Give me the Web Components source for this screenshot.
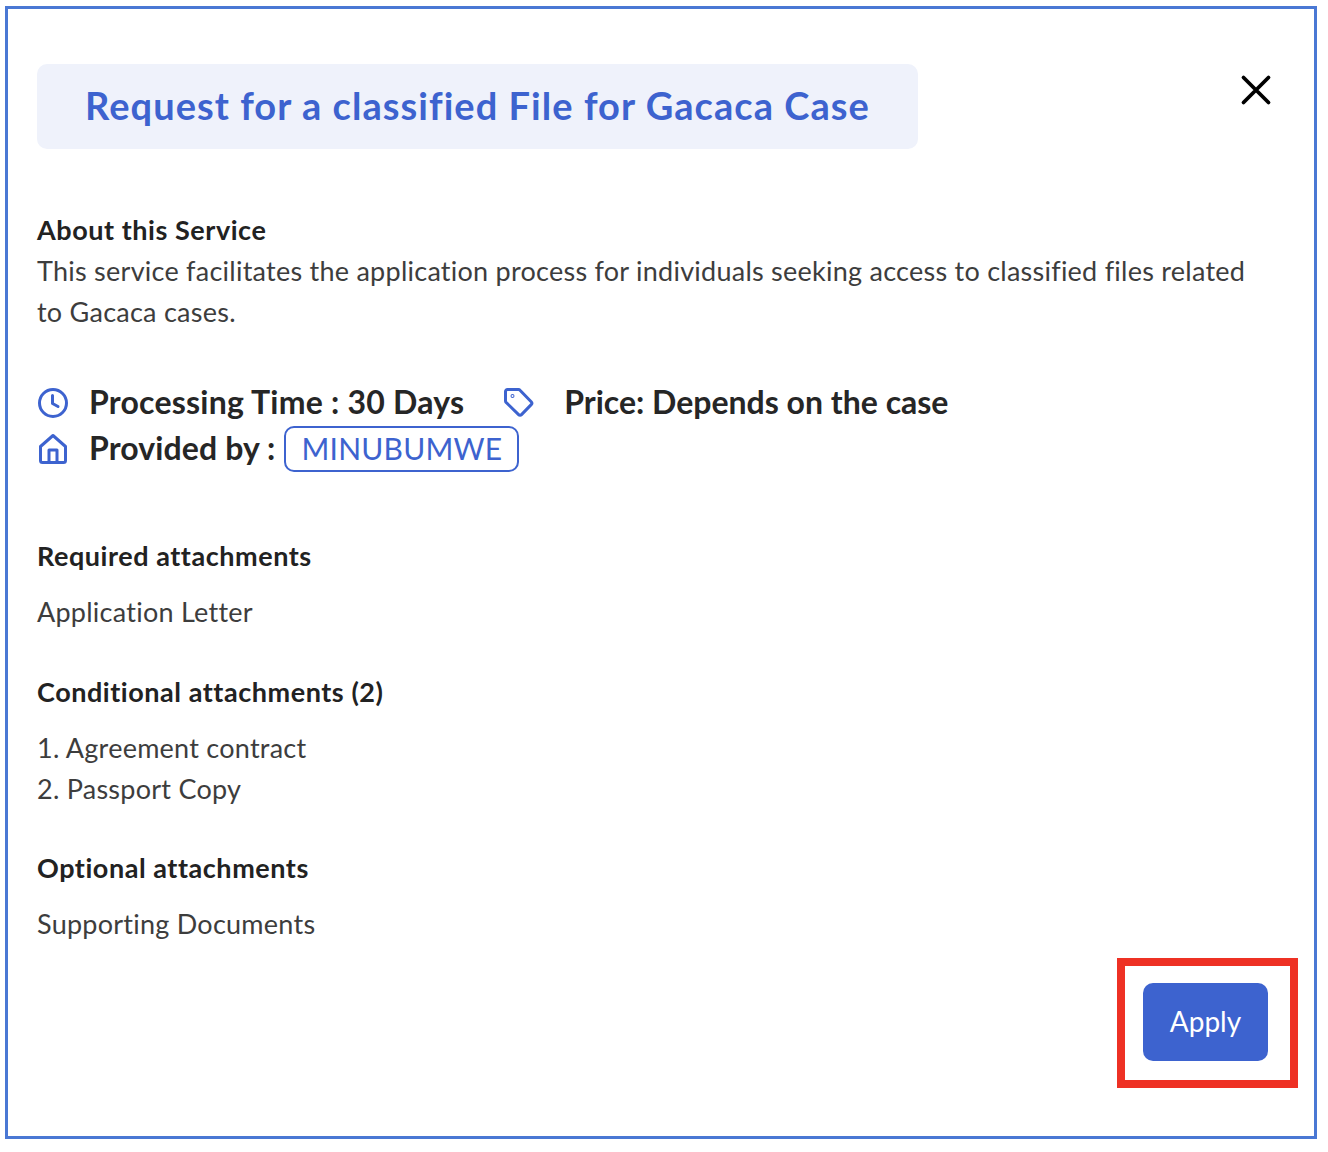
<!DOCTYPE html>
<html>
<head>
<meta charset="utf-8">
<title>Service details</title>
<style>
    html, body { margin: 0; background: #fff; }
    body { font-family: Lato, "Open Sans", sans-serif; color: #333; }
</style>
</head>
<body>
<service-dialog>
    <span slot="title">Request for a classified File for Gacaca Case</span>
    <about-section heading="About this Service">This service facilitates the application process for individuals seeking access to classified files related to Gacaca cases.</about-section>
    <meta-row></meta-row>
    <attachment-group heading="Required attachments"><div>Application Letter</div></attachment-group>
    <attachment-group heading="Conditional attachments (2)"><div>1. Agreement contract</div><div>2. Passport Copy</div></attachment-group>
    <attachment-group heading="Optional attachments"><div>Supporting Documents</div></attachment-group>
    <apply-button slot="footer">Apply</apply-button>
</service-dialog>

<script>
const dialogTemplate = document.createElement('template');
dialogTemplate.innerHTML = `
<style>
    :host {
        display: block;
        box-sizing: border-box;
        width: 1312px;
        height: 1133px;
        margin: 6px 0 0 5px;
        border: 3px solid #4a78d4;
        padding: 55px 29px 0;
        background: #fff;
    }
    header {
        display: flex;
        justify-content: space-between;
        align-items: flex-start;
    }
    h1 {
        box-sizing: border-box;
        width: 881px;
        height: 85px;
        margin: 0;
        padding: 0 0 3px 48px;
        display: flex;
        align-items: center;
        background: #eff2fb;
        border-radius: 10px;
        color: #3d63cf;
        font-size: 38px;
        font-weight: 700;
        letter-spacing: 1.05px;
        white-space: nowrap;
    }
    button {
        border: 0;
        background: none;
        padding: 0;
        margin: 10px 13px 0 0;
        width: 32px;
        height: 32px;
        display: block;
    }
    .body { margin-top: 60px; }
    footer {
        display: flex;
        justify-content: flex-end;
        padding-right: 17px;
        margin-top: 39px;
    }
</style>
<header>
    <h1><slot name="title"></slot></h1>
    <button aria-label="Close">
        <svg width="32" height="32" viewBox="0 0 32 32" fill="none" stroke="#000" stroke-width="3.8" stroke-linecap="round"><path d="M3.5 3.5 28.5 28.5M28.5 3.5 3.5 28.5"/></svg>
    </button>
</header>
<div class="body"><slot></slot></div>
<footer><slot name="footer"></slot></footer>
`;

class ServiceDialog extends HTMLElement {
    constructor() {
        super();
        this.root = this.attachShadow({ mode: 'open' });
        this.root.append(dialogTemplate.content.cloneNode(true));
    }
}

const aboutTemplate = document.createElement('template');
aboutTemplate.innerHTML = `
<style>
    :host {
        display: block;
        font-size: 27px;
        line-height: 41px;
        letter-spacing: .25px;
        color: #3d3d3d;
    }
    h2 { margin: 0; font-size: 27px; line-height: 41px; font-weight: 700; letter-spacing: .55px; color: #222; }
    p { margin: 0; width: 1230px; }
</style>
<h2></h2>
<p><slot></slot></p>
`;

class AboutSection extends HTMLElement {
    constructor() {
        super();
        this.root = this.attachShadow({ mode: 'open' });
        this.root.append(aboutTemplate.content.cloneNode(true));
        this.root.querySelector('h2').textContent = this.getAttribute('heading');
    }
}

const metaTemplate = document.createElement('template');
metaTemplate.innerHTML = `
<style>
    :host {
        display: block;
        margin: 48px 0 63px;
        font-size: 32px;
        font-weight: 700;
        letter-spacing: .22px;
        color: #262626;
    }
    .row { display: flex; align-items: center; height: 46px; white-space: nowrap; }
    svg { flex: none; display: block; }
    .label { margin: 0 0 4px 20px; }
    .by { letter-spacing: .12px; }
    .price { margin: 0 0 4px 29px; letter-spacing: 0; }
    .tag { margin-left: 39px; }
    .chip {
        box-sizing: border-box;
        width: 235px;
        height: 46px;
        margin-left: 9px;
        padding-bottom: 2px;
        display: flex;
        align-items: center;
        justify-content: center;
        border: 2px solid #3d63cf;
        border-radius: 10px;
        color: #3d63cf;
        font-size: 30px;
        font-weight: 400;
    }
</style>
<div class="row">
    <svg width="32" height="32" viewBox="0 0 32 32" fill="none" stroke="#3d63cf" stroke-width="3" stroke-linecap="round" stroke-linejoin="round"><circle cx="16" cy="16" r="13.5"/><path d="M15.5 8.5V16.5L21 19.5"/></svg>
    <span class="label">Processing Time : 30 Days</span>
    <svg class="tag" width="32" height="32" viewBox="0 0 32 32" fill="none" stroke="#3d63cf" stroke-width="3" stroke-linecap="round" stroke-linejoin="round"><path d="M4.5 2.5H15.5A2 2 0 0 1 17 3.2L28.2 14.8A2 2 0 0 1 28.2 17.6L18.5 27.6A2 2 0 0 1 15.6 27.6L3.2 15.5A2 2 0 0 1 2.5 14V4.5A2 2 0 0 1 4.5 2.5Z"/><circle cx="9.5" cy="9" r=".5"/></svg>
    <span class="price">Price: Depends on the case</span>
</div>
<div class="row">
    <svg width="32" height="32" viewBox="0 0 32 32" fill="none" stroke="#3d63cf" stroke-width="3" stroke-linecap="round" stroke-linejoin="round"><path d="M3.5 13.5 16 2.5 28.5 13.5V27.5A2 2 0 0 1 26.5 29.5H5.5A2 2 0 0 1 3.5 27.5Z"/><path d="M12 29.5V17H20V29.5"/></svg>
    <span class="label by">Provided by :</span>
    <span class="chip">MINUBUMWE</span>
</div>
`;

class MetaRow extends HTMLElement {
    constructor() {
        super();
        this.root = this.attachShadow({ mode: 'open' });
        this.root.append(metaTemplate.content.cloneNode(true));
    }
}

const groupTemplate = document.createElement('template');
groupTemplate.innerHTML = `
<style>
    :host {
        display: block;
        margin-top: 38.5px;
        font-size: 27px;
        line-height: 41px;
        letter-spacing: .25px;
        color: #3d3d3d;
    }
    :host(:first-of-type) { margin-top: 0; }
    h3 { margin: 0 0 15px; font-size: 27px; line-height: 41px; font-weight: 700; letter-spacing: .55px; color: #222; }
</style>
<h3></h3>
<slot></slot>
`;

class AttachmentGroup extends HTMLElement {
    constructor() {
        super();
        this.root = this.attachShadow({ mode: 'open' });
        this.root.append(groupTemplate.content.cloneNode(true));
        this.root.querySelector('h3').textContent = this.getAttribute('heading');
    }
}

const applyTemplate = document.createElement('template');
applyTemplate.innerHTML = `
<style>
    :host { display: block; position: relative; }
    button {
        display: block;
        width: 125px;
        height: 78px;
        padding: 0 0 2px;
        border: 0;
        border-radius: 10px;
        background: #3d63cf;
        color: #fff;
        font: 400 28px Lato, "Open Sans", sans-serif;
    }
    .mark {
        position: absolute;
        left: -26px;
        top: -25px;
        width: 181px;
        height: 130px;
        box-sizing: border-box;
        border: 8px solid #ee3124;
        pointer-events: none;
    }
</style>
<button><slot></slot></button>
<div class="mark"></div>
`;

class ApplyButton extends HTMLElement {
    constructor() {
        super();
        this.root = this.attachShadow({ mode: 'open' });
        this.root.append(applyTemplate.content.cloneNode(true));
    }
}

customElements.define('service-dialog', ServiceDialog);
customElements.define('about-section', AboutSection);
customElements.define('meta-row', MetaRow);
customElements.define('attachment-group', AttachmentGroup);
customElements.define('apply-button', ApplyButton);
</script>
</body>
</html>
